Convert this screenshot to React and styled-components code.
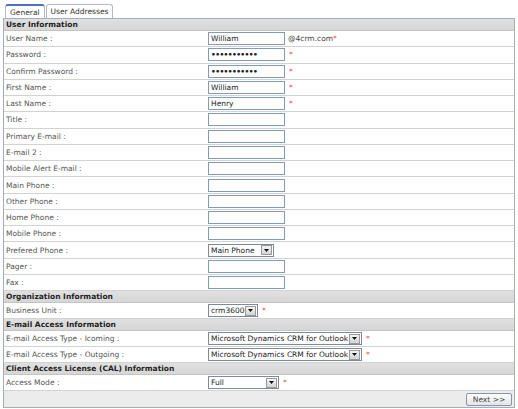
import React from "react";
import styled, { createGlobalStyle } from "styled-components";

const GlobalStyle = createGlobalStyle`
  body {
    margin: 0;
    background: #ffffff;
    font-family: "DejaVu Sans", Verdana, sans-serif;
  }
`;

const Page = styled.div`
  width: 518px;
  height: 409px;
  padding: 4px 3px 0 3px;
  box-sizing: border-box;
  font-size: 7.5px;
  color: #4a4a4a;
`;

const TabBar = styled.div`
  display: flex;
  align-items: flex-end;
  height: 14px;
  padding-left: 2px;
  gap: 1px;
`;

const Tab = styled.div`
  height: ${(p) => (p.$active ? "12px" : "13px")};
  padding: 0 4px;
  display: flex;
  align-items: center;
  background: #ffffff;
  border: 1px solid #b4bac6;
  border-bottom: none;
  border-top: ${(p) => (p.$active ? "2px solid #4f6fc4" : "1px solid #b4bac6")};
  border-radius: 3px 3px 0 0;
  color: #333;
`;

const Panel = styled.div`
  border: 1px solid #a3acc0;
  background: #ffffff;
`;

const SectionHeader = styled.div`
  height: 11px;
  display: flex;
  align-items: center;
  padding-left: 2px;
  background: linear-gradient(#e0e0e0, #d6d6d6);
  border-bottom: 1px solid #c4c4c4;
  font-weight: bold;
  color: #1e1e1e;
`;

const Row = styled.div`
  display: grid;
  grid-template-columns: 204px 1fr;
  align-items: center;
  height: ${(p) => (p.$tall ? "15.27px" : "15px")};
  border-bottom: 1px solid #d2d2d2;
`;

const Label = styled.div`
  padding-left: 2px;
  color: #555;
`;

const Field = styled.div`
  display: flex;
  align-items: center;
  gap: 3px;
`;

const TextBox = styled.div`
  width: 73px;
  height: 11px;
  padding-left: 2px;
  border: 1px solid #7f9db9;
  background: #fff;
  display: flex;
  align-items: center;
  color: #222;
  letter-spacing: ${(p) => (p.$secret ? "-0.6px" : "0")};
  font-weight: ${(p) => (p.$secret ? "bold" : "normal")};
`;

const Select = styled.div`
  width: ${(p) => (p.$width ? `${p.$width}px` : "auto")};
  height: 11px;
  border: 1px solid #7f8a99;
  background: #fff;
  display: flex;
  align-items: center;
  color: #222;
`;

const SelectText = styled.span`
  flex: 1;
  padding: 0 1px 0 2px;
  white-space: nowrap;
  overflow: hidden;
`;

const ArrowBox = styled.span`
  width: 9px;
  height: 8px;
  margin-right: 1px;
  border: 1px solid #9a9a9a;
  background: linear-gradient(#f4f4f4, #d4d4d4);
  display: flex;
  align-items: center;
  justify-content: center;
  flex-shrink: 0;
`;

const Required = styled.span`
  color: #e05858;
  margin-left: ${(p) => (p.$loose ? "1px" : "0")};
`;

const Note = styled.span`
  color: #444;
`;

const Footer = styled.div`
  height: 16px;
  display: flex;
  align-items: center;
  justify-content: flex-end;
  padding-right: 2px;
  background: #ececec;
`;

const NextButton = styled.button`
  width: 46px;
  height: 13px;
  padding: 0;
  font-family: inherit;
  font-size: 7.5px;
  color: #445;
  border: 1px solid #8796b0;
  border-radius: 2px;
  background: linear-gradient(#ffffff, #e4e4e4);
`;

const Arrow = () => (
  <ArrowBox>
    <svg width="5" height="3" viewBox="0 0 5 3">
      <path d="M0 0 H5 L2.5 3 Z" fill="#111" />
    </svg>
  </ArrowBox>
);

const DropDown = ({ width, value }) => (
  <Select $width={width}>
    <SelectText>{value}</SelectText>
    <Arrow />
  </Select>
);

const userRows = [
  { label: "User Name :", value: "William", extra: "@4crm.com", req: true },
  { label: "Password :", value: "•••••••••••", secret: true, req: true },
  { label: "Confirm Password :", value: "•••••••••••", secret: true, req: true },
  { label: "First Name :", value: "William", req: true },
  { label: "Last Name :", value: "Henry", req: true },
  { label: "Title :" },
  { label: "Primary E-mail :" },
  { label: "E-mail 2 :" },
  { label: "Mobile Alert E-mail :" },
  { label: "Main Phone :" },
  { label: "Other Phone :" },
  { label: "Home Phone :" },
  { label: "Mobile Phone :" },
  { label: "Prefered Phone :", select: "Main Phone", width: 64 },
  { label: "Pager :" },
  { label: "Fax :" },
];

const FormRow = ({ label, value = "", secret, extra, req, select, width, tall }) => (
  <Row $tall={tall}>
    <Label>{label}</Label>
    <Field>
      {select ? (
        <DropDown width={width} value={select} />
      ) : (
        <TextBox $secret={secret}>{value}</TextBox>
      )}
      {extra ? (
        <Note>
          {extra}
          <Required>*</Required>
        </Note>
      ) : (
        req && <Required $loose>*</Required>
      )}
    </Field>
  </Row>
);

export default function App() {
  return (
    <Page>
      <GlobalStyle />
      <TabBar>
        <Tab $active>General</Tab>
        <Tab>User Addresses</Tab>
      </TabBar>
      <Panel>
        <SectionHeader>User Information</SectionHeader>
        {userRows.map((r) => (
          <FormRow key={r.label} tall {...r} />
        ))}
        <SectionHeader>Organization Information</SectionHeader>
        <FormRow label="Business Unit :" select="crm3600" width={48} req />
        <SectionHeader>E-mail Access Information</SectionHeader>
        <FormRow
          label="E-mail Access Type - Icoming :"
          select="Microsoft Dynamics CRM for Outlook"
          req
        />
        <FormRow
          label="E-mail Access Type - Outgoing :"
          select="Microsoft Dynamics CRM for Outlook"
          req
        />
        <SectionHeader>Client Access License (CAL) Information</SectionHeader>
        <FormRow label="Access Mode :" select="Full" width={69} req />
        <Footer>
          <NextButton>Next &gt;&gt;</NextButton>
        </Footer>
      </Panel>
    </Page>
  );
}
